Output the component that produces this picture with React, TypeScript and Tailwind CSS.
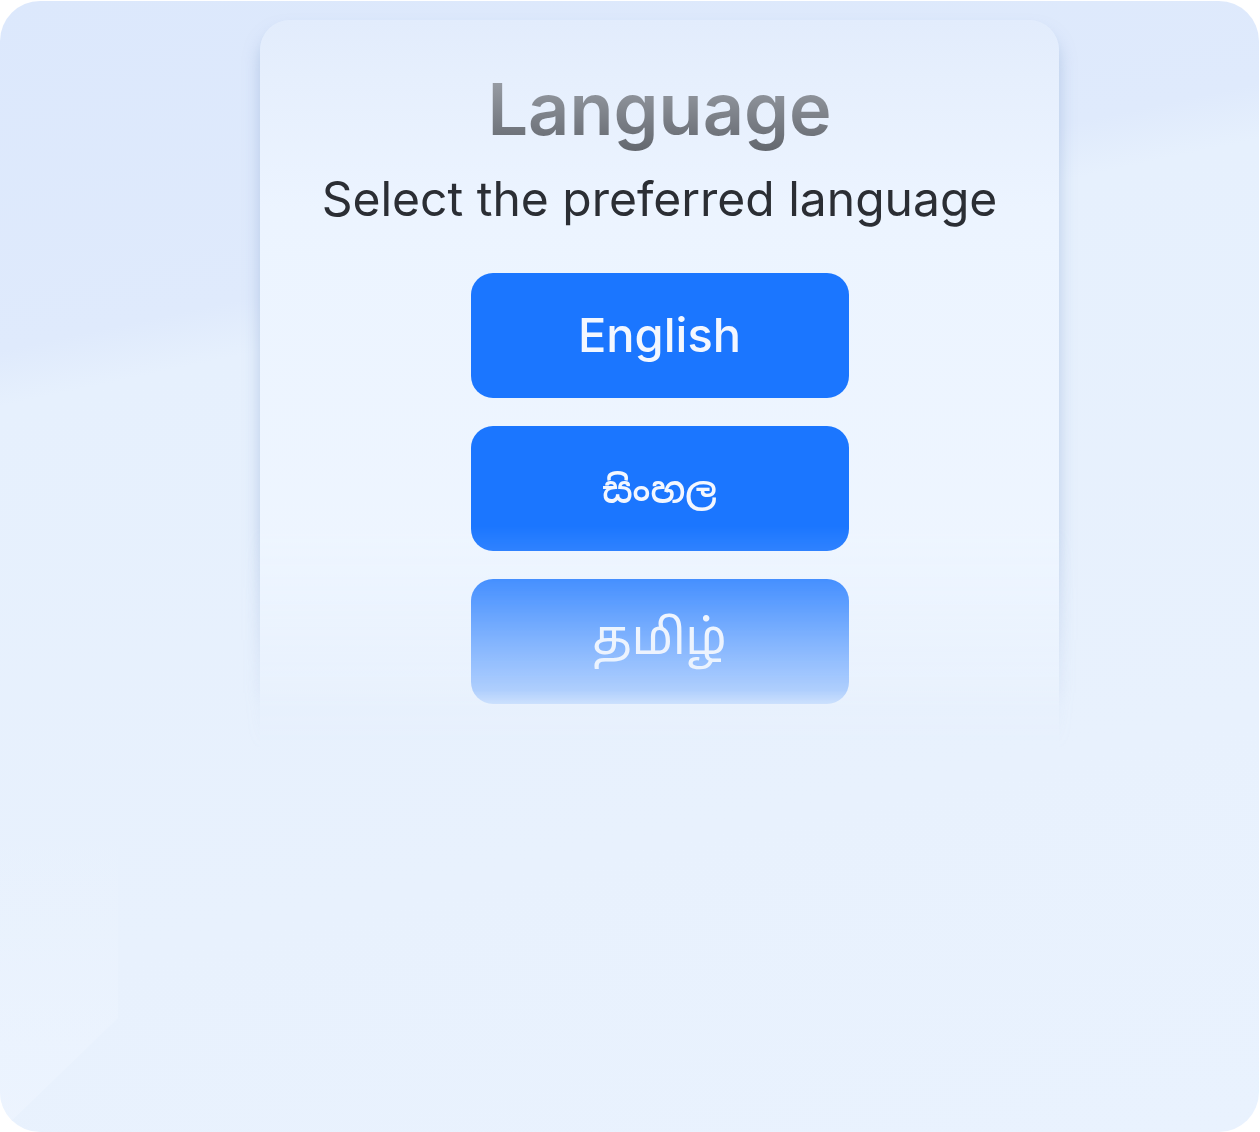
import React from "react";

const languages = [
  { label: "English", font: "font-['Inter',sans-serif] font-medium text-[47px]" },
  { label: "සිංහල", font: "font-['Noto_Sans_Sinhala','Inter',sans-serif] font-semibold text-[36px] pt-[4px]" },
  { label: "தமிழ்", font: "font-['Noto_Sans_Tamil','Inter',sans-serif] font-normal text-[48px]" },
];

function LanguageButton({ label, font }: { label: string; font: string }) {
  return (
    <button
      type="button"
      className={`flex h-[125px] w-[378px] items-center justify-center rounded-[22px] bg-[#1b76ff] text-[#f3f7ff] ${font}`}
    >
      {label}
    </button>
  );
}

export default function App() {
  return (
    <div className="min-h-screen bg-white pt-px font-['Inter',sans-serif]">
      <div className="relative h-[1131px] w-[1259px] overflow-hidden rounded-[40px] bg-[linear-gradient(168deg,#dce8fc_0%,#dfeafc_25%,#e6f0fd_29%,#e8f1fd_70%,#e9f2fe_100%)]">
        {/* faint lighter strip in the lower left corner */}
        <div className="pointer-events-none absolute bottom-0 left-0 h-[300px] w-[118px] bg-gradient-to-b from-transparent to-[#eef5ff]/70 [clip-path:polygon(0_0,100%_0,100%_62%,0_100%)]" />

        <div className="relative pt-[19px] pb-[40px] [mask-image:linear-gradient(to_bottom,#000_525px,rgba(0,0,0,0.8)_577px,rgba(0,0,0,0.5)_639px,rgba(0,0,0,0.28)_689px,rgba(0,0,0,0.12)_704px,transparent_750px)]">
          <div className="ml-[260px] flex h-[760px] w-[799px] flex-col items-center rounded-[30px] bg-[linear-gradient(to_bottom,#e2ecfc_0px,#e6effd_60px,#ecf4ff_190px,#eff6ff_100%)] pt-[53px] shadow-[0_12px_16px_rgba(140,168,212,0.5)]">
            <h1 className="bg-gradient-to-b from-[#9ea3ab] to-[#5c6067] bg-clip-text pb-[16px] text-[72px] leading-[72px] font-semibold text-transparent">
              Language
            </h1>
            <p className="mt-[11px] text-[48px] leading-[54px] text-[#2b2e34]">
              Select the preferred language
            </p>
            <div className="mt-[47px] flex flex-col gap-[28px]">
              {languages.map((l) => (
                <LanguageButton key={l.label} label={l.label} font={l.font} />
              ))}
            </div>
          </div>
        </div>
      </div>
    </div>
  );
}
